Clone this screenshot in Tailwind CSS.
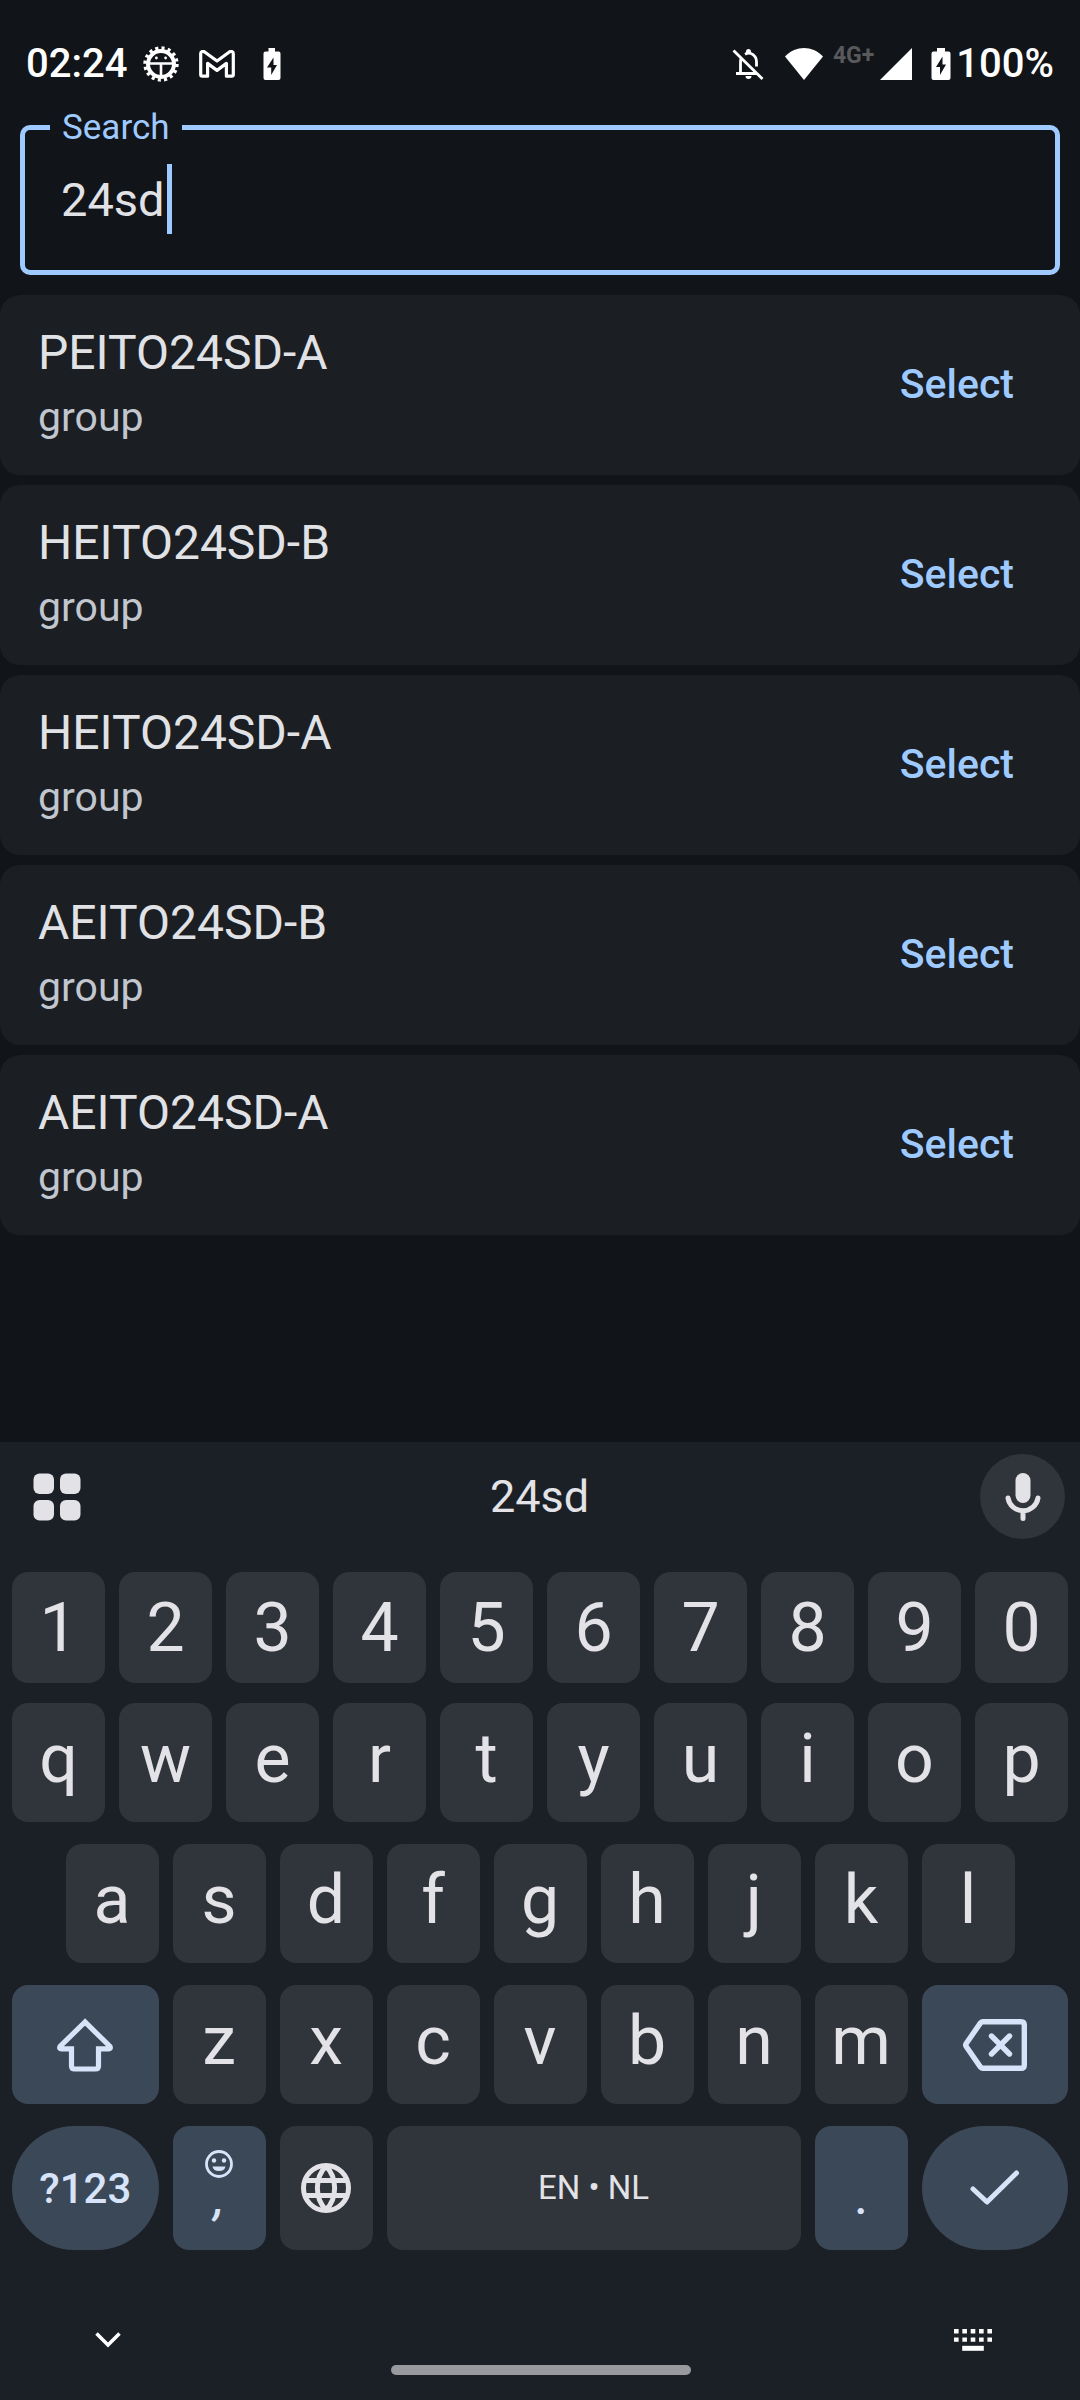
<!DOCTYPE html>
<html lang="en">
<head>
<meta charset="utf-8">
<meta name="viewport" content="width=device-width, initial-scale=1">
<title>Search</title>
<script src="https://cdn.jsdelivr.net/npm/@tailwindcss/browser@4"></script>
</head>
<body class="flex min-h-screen flex-col bg-[#111418] font-[Roboto,sans-serif] text-[#e1e2e6]">

<!-- Status bar -->
<header class="flex h-[107px] items-center justify-between px-[26px] pt-[21px] text-[40px] font-medium text-white">
  <div class="flex items-center">
    <time>02:24</time>
    <svg class="ml-4 size-9" viewBox="0 0 36 36" fill="none" stroke="currentColor" aria-hidden="true">
      <circle cx="18" cy="18" r="13" stroke-width="4"/>
      <circle cx="18" cy="18" r="16" stroke-width="3.4" stroke-dasharray="3.1 3.183"/>
      <path d="M6 17.5h24M18 18v13" stroke-width="2.6"/>
      <circle cx="13.4" cy="12" r="1.4" fill="currentColor" stroke="none"/>
      <circle cx="22.6" cy="12" r="1.4" fill="currentColor" stroke="none"/>
    </svg>
    <svg class="ml-5 h-7 w-9" viewBox="0 0 36 28" fill="none" stroke="currentColor" stroke-width="3.2" stroke-linejoin="round" aria-hidden="true">
      <path d="M1.700 3.600V24.600q0 1.600 1.600 1.600h5.300V13.400L18 20.400l9.400-7V26.200h5.300q1.600 0 1.600-1.600V3.600C34.300 1.400 32 .8 30 2.200L18 11 6 2.200C4 .8 1.700 1.400 1.700 3.600z"/>
    </svg>
    <svg class="ml-7 h-8 w-[18px]" viewBox="0 0 18 32" aria-hidden="true">
      <path fill="currentColor" d="M5.500 0h6.500v3.500h3.500q2 0 2 2V30q0 2-2 2h-13q-2 0-2-2V5.500q0-2 2-2h3z"/>
      <path fill="#111418" d="M10.500 9.500 4 19.500h4.200V27L14 17h-3.500z"/>
    </svg>
  </div>
  <div class="flex items-center">
    <svg class="h-8 w-8" viewBox="0 0 32 32" fill="none" stroke="currentColor" aria-hidden="true">
      <path stroke-width="2.800" d="M1.500 2.500 30.500 31M4 25.500h21M8.500 25V14c0-2 .4-3.600 1.200-5M13 6.200c6-3 11.500 1.500 11.500 7.800v4.500"/>
      <path fill="currentColor" stroke="none" d="M14 5V3.500a2.500 2.500 0 0 1 5 0V5zM13.500 28h6a3 3 0 0 1-6 0z"/>
    </svg>
    <svg class="ml-[21px] h-8 w-[38px]" viewBox="0 0 38 32" fill="currentColor" aria-hidden="true"><path d="M19 32 0 8.500C11-2.800 27-2.800 38 8.500z"/></svg>
    <span class="ml-[10px] self-start text-[23px] font-bold leading-[44px] text-[#58595c]">4G+</span>
    <svg class="ml-[6px] size-8" viewBox="0 0 32 32" fill="currentColor" aria-hidden="true"><path d="M32 0v32H0z"/></svg>
    <svg class="ml-[19px] h-8 w-5" viewBox="0 0 20 32" aria-hidden="true">
      <path fill="currentColor" d="M6 0h8v3.500h3.500q2 0 2 2V30q0 2-2 2h-15q-2 0-2-2V5.500q0-2 2-2H6z"/>
      <path fill="#111418" d="M11.500 8.500 5 19h4v8l6-10.500h-3.500z"/>
    </svg>
    <span class="ml-[5px]">100%</span>
  </div>
</header>

<main>
  <fieldset class="mx-5 rounded-[10px] border-5 border-[#9fcaff] pb-5">
    <legend class="ml-[25px] px-3 text-[35px] leading-[41px] text-[#9fcaff]"><label for="search">Search</label></legend>
    <div class="relative">
      <input id="search" type="text" value="24sd" class="block h-[102px] w-full bg-transparent px-9 text-[47px] caret-transparent outline-none">
      <span class="absolute left-[142px] top-4 h-[70px] w-[5px] bg-[#9fcaff]"></span>
    </div>
  </fieldset>

  <ul class="mt-5 flex flex-col gap-[10px]">
    <li class="flex items-center justify-between rounded-[20px] bg-[#1b1e22] py-[26px] pl-[38px] pr-[66px]">
      <div><h2 class="text-[48px] leading-[64px]">PEITO24SD-A</h2><p class="text-[41px] leading-[64px] text-[#c1c6cf]">group</p></div>
      <button type="button" class="text-[41px] font-medium text-[#9fcaff]">Select</button>
    </li>
    <li class="flex items-center justify-between rounded-[20px] bg-[#1b1e22] py-[26px] pl-[38px] pr-[66px]">
      <div><h2 class="text-[48px] leading-[64px]">HEITO24SD-B</h2><p class="text-[41px] leading-[64px] text-[#c1c6cf]">group</p></div>
      <button type="button" class="text-[41px] font-medium text-[#9fcaff]">Select</button>
    </li>
    <li class="flex items-center justify-between rounded-[20px] bg-[#1b1e22] py-[26px] pl-[38px] pr-[66px]">
      <div><h2 class="text-[48px] leading-[64px]">HEITO24SD-A</h2><p class="text-[41px] leading-[64px] text-[#c1c6cf]">group</p></div>
      <button type="button" class="text-[41px] font-medium text-[#9fcaff]">Select</button>
    </li>
    <li class="flex items-center justify-between rounded-[20px] bg-[#1b1e22] py-[26px] pl-[38px] pr-[66px]">
      <div><h2 class="text-[48px] leading-[64px]">AEITO24SD-B</h2><p class="text-[41px] leading-[64px] text-[#c1c6cf]">group</p></div>
      <button type="button" class="text-[41px] font-medium text-[#9fcaff]">Select</button>
    </li>
    <li class="flex items-center justify-between rounded-[20px] bg-[#1b1e22] py-[26px] pl-[38px] pr-[66px]">
      <div><h2 class="text-[48px] leading-[64px]">AEITO24SD-A</h2><p class="text-[41px] leading-[64px] text-[#c1c6cf]">group</p></div>
      <button type="button" class="text-[41px] font-medium text-[#9fcaff]">Select</button>
    </li>
  </ul>
</main>

<!-- On-screen keyboard -->
<section aria-label="Keyboard" class="mt-auto bg-[#1b1f26] text-[#e3e2e6]">
  <div class="flex h-[109px] items-center justify-between pl-[14px] pr-[15px]">
    <button type="button" aria-label="Keyboard menu" class="flex size-[85px] items-center justify-center">
      <svg class="size-12" viewBox="0 0 48 48" fill="currentColor"><rect x=".5" y=".5" width="20.500" height="20.500" rx="6"/><rect x="27" y=".5" width="20.500" height="20.500" rx="6"/><rect x=".5" y="27" width="20.500" height="20.500" rx="6"/><rect x="27" y="27" width="20.500" height="20.500" rx="6"/></svg>
    </button>
    <button type="button" class="text-[45px]">24sd</button>
    <button type="button" aria-label="Voice input" class="flex size-[85px] items-center justify-center rounded-full bg-[#30343b]">
      <svg class="h-12 w-9" viewBox="0 0 36 48" fill="none" stroke="currentColor" stroke-width="5" stroke-linecap="round"><rect x="10.500" y="0" width="15" height="30" rx="7.500" fill="currentColor" stroke="none"/><path d="M3 25a15.200 15.200 0 0 0 30 0M18 38v7.500"/></svg>
    </button>
  </div>

  <div class="mt-[21px] grid grid-cols-10 gap-[14px] px-3 text-[68px]">
    <button type="button" class="h-[111px] rounded-2xl bg-[#30343b]">1</button>
    <button type="button" class="h-[111px] rounded-2xl bg-[#30343b]">2</button>
    <button type="button" class="h-[111px] rounded-2xl bg-[#30343b]">3</button>
    <button type="button" class="h-[111px] rounded-2xl bg-[#30343b]">4</button>
    <button type="button" class="h-[111px] rounded-2xl bg-[#30343b]">5</button>
    <button type="button" class="h-[111px] rounded-2xl bg-[#30343b]">6</button>
    <button type="button" class="h-[111px] rounded-2xl bg-[#30343b]">7</button>
    <button type="button" class="h-[111px] rounded-2xl bg-[#30343b]">8</button>
    <button type="button" class="h-[111px] rounded-2xl bg-[#30343b]">9</button>
    <button type="button" class="h-[111px] rounded-2xl bg-[#30343b]">0</button>
  </div>

  <div class="mt-5 grid grid-cols-20 gap-x-[14px] gap-y-[22px] px-3 text-[68px]">
    <button type="button" class="col-span-2 h-[119px] rounded-2xl bg-[#30343b] pb-2">q</button>
    <button type="button" class="col-span-2 h-[119px] rounded-2xl bg-[#30343b] pb-2">w</button>
    <button type="button" class="col-span-2 h-[119px] rounded-2xl bg-[#30343b] pb-2">e</button>
    <button type="button" class="col-span-2 h-[119px] rounded-2xl bg-[#30343b] pb-2">r</button>
    <button type="button" class="col-span-2 h-[119px] rounded-2xl bg-[#30343b] pb-2">t</button>
    <button type="button" class="col-span-2 h-[119px] rounded-2xl bg-[#30343b] pb-2">y</button>
    <button type="button" class="col-span-2 h-[119px] rounded-2xl bg-[#30343b] pb-2">u</button>
    <button type="button" class="col-span-2 h-[119px] rounded-2xl bg-[#30343b] pb-2">i</button>
    <button type="button" class="col-span-2 h-[119px] rounded-2xl bg-[#30343b] pb-2">o</button>
    <button type="button" class="col-span-2 h-[119px] rounded-2xl bg-[#30343b] pb-2">p</button>

    <button type="button" class="col-span-2 col-start-2 h-[119px] rounded-2xl bg-[#30343b] pb-2">a</button>
    <button type="button" class="col-span-2 h-[119px] rounded-2xl bg-[#30343b] pb-2">s</button>
    <button type="button" class="col-span-2 h-[119px] rounded-2xl bg-[#30343b] pb-2">d</button>
    <button type="button" class="col-span-2 h-[119px] rounded-2xl bg-[#30343b] pb-2">f</button>
    <button type="button" class="col-span-2 h-[119px] rounded-2xl bg-[#30343b] pb-2">g</button>
    <button type="button" class="col-span-2 h-[119px] rounded-2xl bg-[#30343b] pb-2">h</button>
    <button type="button" class="col-span-2 h-[119px] rounded-2xl bg-[#30343b] pb-2">j</button>
    <button type="button" class="col-span-2 h-[119px] rounded-2xl bg-[#30343b] pb-2">k</button>
    <button type="button" class="col-span-2 h-[119px] rounded-2xl bg-[#30343b] pb-2">l</button>

    <button type="button" aria-label="Shift" class="col-span-3 col-start-1 flex h-[119px] items-center justify-center rounded-2xl bg-[#3b4858] text-[#d7e3f8]">
      <svg class="h-[54px] w-[58px]" viewBox="0 0 58 54" fill="none" stroke="currentColor" stroke-width="5.200"><path d="M29 4 4 28.500q-1 2.300 1 2.300h10.500V48q0 3 3 3h21q3 0 3-3V30.800H53q2 0 1-2.300z"/></svg>
    </button>
    <button type="button" class="col-span-2 h-[119px] rounded-2xl bg-[#30343b] pb-2">z</button>
    <button type="button" class="col-span-2 h-[119px] rounded-2xl bg-[#30343b] pb-2">x</button>
    <button type="button" class="col-span-2 h-[119px] rounded-2xl bg-[#30343b] pb-2">c</button>
    <button type="button" class="col-span-2 h-[119px] rounded-2xl bg-[#30343b] pb-2">v</button>
    <button type="button" class="col-span-2 h-[119px] rounded-2xl bg-[#30343b] pb-2">b</button>
    <button type="button" class="col-span-2 h-[119px] rounded-2xl bg-[#30343b] pb-2">n</button>
    <button type="button" class="col-span-2 h-[119px] rounded-2xl bg-[#30343b] pb-2">m</button>
    <button type="button" aria-label="Backspace" class="col-span-3 flex h-[119px] items-center justify-center rounded-2xl bg-[#3b4858] text-[#d7e3f8]">
      <svg class="h-[52px] w-16" viewBox="0 0 64 52" fill="none" stroke="currentColor" stroke-width="5.400" stroke-linejoin="round" stroke-linecap="round"><path d="M20 2.700h38q3.300 0 3.300 3.300v40q0 3.300-3.300 3.300H20q-1.500 0-2.500-1.200L3.200 27.500q-1-1.500 0-3L17.500 3.900Q18.500 2.700 20 2.700zM28.500 17l18 18M46.500 17l-18 18"/></svg>
    </button>

    <button type="button" class="col-span-3 h-[124px] rounded-full bg-[#3b4858] text-[42px] font-medium text-[#d7e3f8]">?123</button>
    <button type="button" aria-label="Comma, emoji" class="col-span-2 flex h-[124px] flex-col items-center rounded-2xl bg-[#3b4858] pt-6 text-[46px] font-medium leading-[40px] text-[#d7e3f8]">
      <svg class="size-7" viewBox="0 0 28 28" fill="none" stroke="currentColor" stroke-width="2.800"><circle cx="14" cy="14" r="12.500"/><circle cx="9" cy="10.500" r="2.200" fill="currentColor" stroke="none"/><circle cx="19" cy="10.500" r="2.200" fill="currentColor" stroke="none"/><path d="M7.500 16.500h13a6.600 5.500 0 0 1-13 0z" fill="currentColor" stroke="none"/></svg>
      <span class="italic">,</span>
    </button>
    <button type="button" aria-label="Switch language" class="col-span-2 flex h-[124px] items-center justify-center rounded-2xl bg-[#30343b]">
      <svg class="size-[50px]" viewBox="0 0 50 50" fill="none" stroke="currentColor" stroke-width="5"><circle cx="25" cy="25" r="22.500"/><path d="M4 17.500h42M4 32.500h42M25 3c-11.500 12-11.500 32 0 44M25 3c11.500 12 11.500 32 0 44"/></svg>
    </button>
    <button type="button" class="col-span-8 h-[124px] rounded-2xl bg-[#30343b] text-[33px]">EN • NL</button>
    <button type="button" class="col-span-2 flex h-[124px] flex-col items-center rounded-2xl bg-[#3b4858] pt-[52px] text-[46px] font-medium leading-[40px] text-[#d7e3f8]">.</button>
    <button type="button" aria-label="Done" class="col-span-3 flex h-[124px] items-center justify-center rounded-full bg-[#3b4858] text-[#d7e3f8]">
      <svg class="h-9 w-[50px]" viewBox="0 0 50 36" fill="none" stroke="currentColor" stroke-width="5" stroke-linecap="round" stroke-linejoin="round"><path d="M3 19l14 13L46.500 3"/></svg>
    </button>
  </div>

  <!-- Navigation bar -->
  <nav class="mt-[65px] flex h-[85px] items-start justify-between pb-[25px] pl-[83px] pr-[82px] text-white">
    <button type="button" aria-label="Hide keyboard" class="flex size-[50px] items-center justify-center">
      <svg class="h-4 w-[26px]" viewBox="0 0 26 16" fill="none" stroke="currentColor" stroke-width="3.600"><path d="M1.500 1.500 13 13 24.500 1.500"/></svg>
    </button>
    <span class="h-[10px] w-[300px] self-end rounded-full bg-[#98999c]"></span>
    <button type="button" aria-label="Choose keyboard" class="flex size-[50px] items-center justify-center">
      <svg class="h-[22px] w-[38px]" viewBox="0 0 38 22" fill="none" stroke="currentColor"><path stroke-width="4.400" stroke-dasharray="4.600 3.750" d="M0 2.200h38M0 10.600h38"/><path stroke-width="5" d="M8.200 19.300h21.600"/></svg>
    </button>
  </nav>
</section>
</body>
</html>
